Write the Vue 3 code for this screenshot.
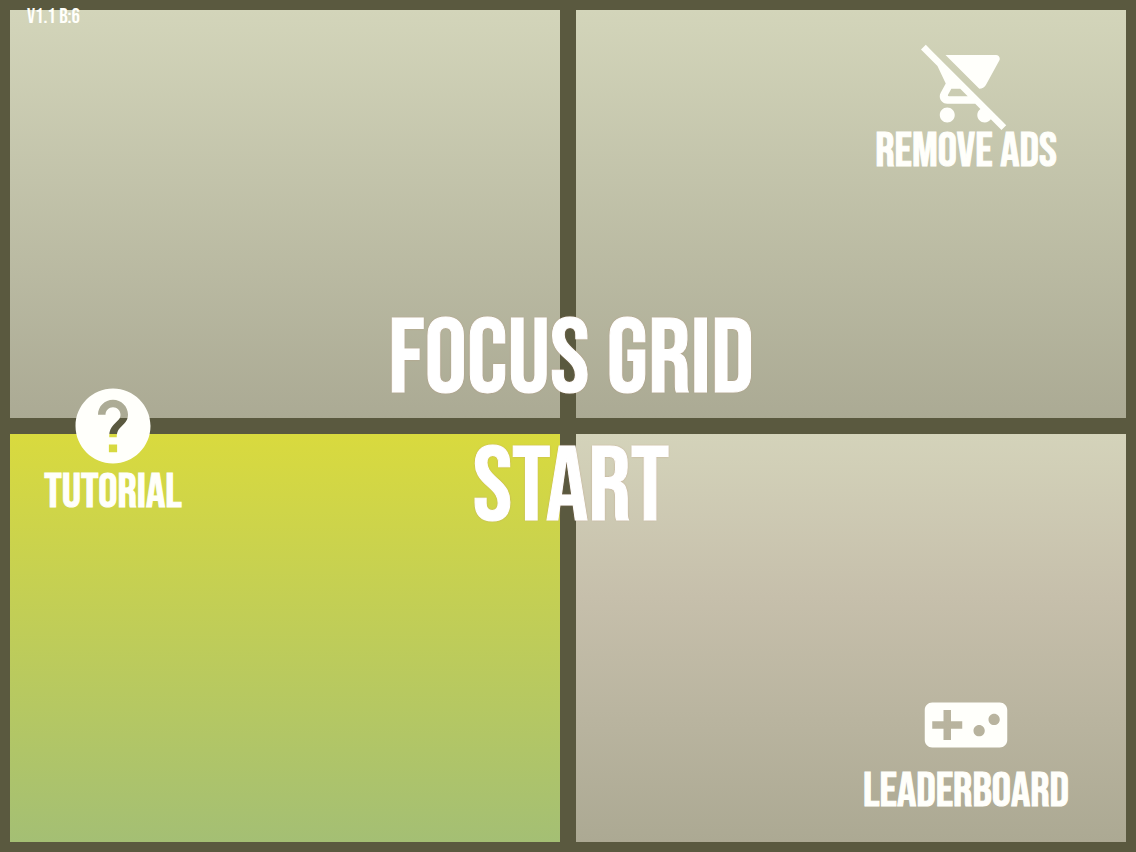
<script setup>
const version = 'V1.1 B:6'
</script>

<template>
  <main class="board">
    <section class="tile"></section>
    <section class="tile tile-top">
      <button class="action" type="button">
        <svg class="icon" viewBox="0 0 24 24" aria-hidden="true">
          <path d="M22.73 22.73L2.77 2.77 2 2l-.73-.73L0 2.54l4.39 4.39 2.21 4.66-1.35 2.45c-.16.28-.25.61-.25.96 0 1.1.9 2 2 2h7.46l1.38 1.38c-.5.36-.83.95-.83 1.62 0 1.1.89 2 1.99 2 .67 0 1.26-.33 1.62-.84L21.46 24l1.27-1.27zM7.42 15c-.14 0-.25-.11-.25-.25l.03-.12.9-1.63h2.36l2 2H7.42zm8.13-2c.75 0 1.41-.41 1.75-1.03l3.58-6.49c.08-.14.12-.31.12-.48 0-.55-.45-1-1-1H6.54l9.01 9zM7 18c-1.1 0-1.99.9-1.99 2S5.9 22 7 22s2-.9 2-2-.9-2-2-2z" />
        </svg>
        <span class="label">REMOVE ADS</span>
      </button>
    </section>
    <section class="tile tile-lit"></section>
    <section class="tile tile-bottom">
      <button class="action" type="button">
        <svg class="icon" viewBox="0 0 24 24" aria-hidden="true">
          <path d="M21 6H3c-1.1 0-2 .9-2 2v8c0 1.1.9 2 2 2h18c1.1 0 2-.9 2-2V8c0-1.1-.9-2-2-2zm-10 7H8v3H6v-3H3v-2h3V8h2v3h3v2zm4.5 2c-.83 0-1.5-.67-1.5-1.5s.67-1.5 1.5-1.5 1.5.67 1.5 1.5-.67 1.5-1.5 1.5zm4-3c-.83 0-1.5-.67-1.5-1.5S18.67 9 19.5 9s1.5.67 1.5 1.5-.67 1.5-1.5 1.5z" />
        </svg>
        <span class="label">LEADERBOARD</span>
      </button>
    </section>

    <p class="version">{{ version }}</p>

    <div class="hero">
      <h1 class="headline">FOCUS GRID</h1>
      <button class="headline" type="button">START</button>
    </div>

    <div class="side">
      <button class="action action-tutorial" type="button">
        <svg class="icon" viewBox="0 0 24 24" aria-hidden="true">
          <path d="M12 2C6.48 2 2 6.48 2 12s4.48 10 10 10 10-4.48 10-10S17.52 2 12 2zm1.1 17h-2.2v-2.1h2.2v2.1zm1.97-7.75l-.9.92C13.45 12.9 13 13.5 13 15h-2v-.5c0-1.1.45-2.1 1.17-2.83l1.24-1.26c.37-.36.59-.86.59-1.41 0-1.1-.9-2-2-2s-2 .9-2 2H8c0-2.21 1.79-4 4-4s4 1.79 4 4c0 .88-.36 1.68-.93 2.25z" />
        </svg>
        <span class="label">TUTORIAL</span>
      </button>
    </div>
  </main>
</template>

<style>
body {
  margin: 0;
  background: #5a593f;
}
</style>

<style scoped>
.board {
  position: relative;
  display: grid;
  grid-template-columns: 1fr 1fr;
  grid-template-rows: 1fr 1fr;
  gap: 16px;
  box-sizing: border-box;
  min-height: 100vh;
  padding: 10px;
  background: #5a593f;
  color: #fffffb;
  font-family: "Bebas Neue", "Roboto Condensed", "Liberation Sans Narrow", "DejaVu Sans Condensed", sans-serif;
  font-weight: 400;
}

.tile {
  display: flex;
  justify-content: flex-end;
  background: linear-gradient(#d3d5ba, #abaa94);
}

.tile-top {
  align-items: flex-start;
  box-sizing: border-box;
  padding: 30px 58px 0 0;
}

.tile-lit {
  background: linear-gradient(#d9da3e, #a4bf74);
}

.tile-bottom {
  align-items: flex-end;
  box-sizing: border-box;
  padding: 0 58px 30px 0;
  background: linear-gradient(#d4d3ba, #c6bfab 40%, #aca993);
}

button {
  margin: 0;
  padding: 0;
  border: 0;
  background: none;
  color: inherit;
  font: inherit;
  cursor: pointer;
}

.action {
  display: flex;
  flex-direction: column;
  align-items: center;
  gap: 2px;
  width: 204px;
}

.action-tutorial {
  width: 140px;
}

.icon {
  display: block;
  width: 90px;
  height: 90px;
  fill: currentColor;
}

.label {
  font-size: 48px;
  line-height: 40px;
  white-space: nowrap;
  -webkit-text-stroke: 1px currentColor;
}

.version {
  position: absolute;
  top: 7px;
  left: 27px;
  margin: 0;
  font-size: 21px;
  line-height: 20px;
}

.hero {
  position: absolute;
  inset: 0;
  display: flex;
  flex-direction: column;
  align-items: center;
  justify-content: center;
  padding: 0 0 2px 6px;
}

.headline {
  margin: 0;
  color: #fff;
  font-size: 106px;
  font-weight: 400;
  line-height: 128px;
  -webkit-text-stroke: 1px currentColor;
  text-shadow: 0 0 2px #b98a70;
}

.side {
  position: absolute;
  top: 0;
  bottom: 0;
  left: 43px;
  display: flex;
  align-items: center;
  padding-top: 42px;
}
</style>
